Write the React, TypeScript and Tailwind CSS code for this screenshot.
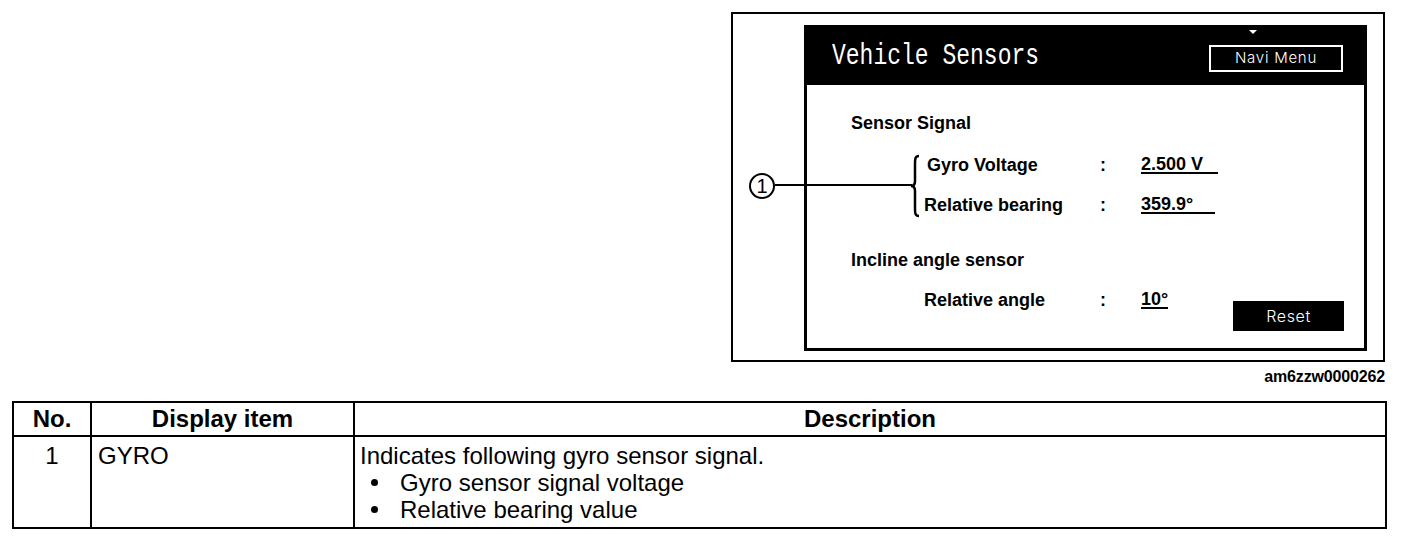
import React from "react";

const rows = [
  { label: "Gyro Voltage", value: "2.500 V", line: "w-[77px]", indent: "pl-[3px]" },
  { label: "Relative bearing", value: "359.9°", line: "w-[74px]", indent: "" },
];

const Value = ({ text, line }: { text: string; line: string }) => (
  <span className={`inline-block border-b-2 border-black leading-[16px] ${line}`}>{text}</span>
);

export default function App() {
  return (
    <div className="relative w-[1408px] h-[544px] overflow-hidden bg-white text-black font-['Liberation_Sans',Arial,sans-serif]">
      <div className="flex flex-col items-end pt-[12px] pr-[23px]">
        {/* figure frame */}
        <div className="flex w-[654px] h-[350px] border-2 border-black pl-[71px] pt-[11px] pr-[16px] pb-[9px]">
          <div className="flex flex-1 flex-col border-[3px] border-black">
            <div className="relative flex h-[57px] items-start justify-between bg-black pl-[25px] pr-[21px]">
              <span className="mt-[13px] inline-block origin-center scale-y-[1.25] font-['Liberation_Mono',monospace] text-[23px] leading-[30px] text-white">
                Vehicle Sensors
              </span>
              <span className="absolute left-[442px] top-[2px] h-0 w-0 border-x-[4px] border-t-[4px] border-x-transparent border-t-white" />
              <div className="mt-[17px] flex h-[27px] w-[134px] items-center justify-center border-2 border-white font-['Inter',sans-serif] text-[15px] font-light tracking-[0.05em] text-white">
                Navi Menu
              </div>
            </div>

            <div className="flex flex-1 flex-col pl-[44px] pr-[20px] pt-[26px] text-[18px] font-bold">
              <div className="leading-[24px]">Sensor Signal</div>
              <div className="mt-[10px] pl-[73px]">
                {rows.map((r) => (
                  <div key={r.label} className="flex h-[40px] items-center">
                    <span className={`w-[176px] ${r.indent}`}>{r.label}</span>
                    <span className="w-[41px]">:</span>
                    <Value text={r.value} line={r.line} />
                  </div>
                ))}
              </div>
              <div className="mt-[23px] leading-[24px]">Incline angle sensor</div>
              <div className="mt-[8px] flex items-start pl-[73px]">
                <span className="w-[176px] leading-[40px]">Relative angle</span>
                <span className="w-[41px] leading-[40px]">:</span>
                <div className="flex h-[40px] items-center">
                  <Value text="10°" line="" />
                </div>
                <div className="ml-auto mt-[21px] flex h-[30px] w-[111px] items-center justify-center bg-black font-['Inter',sans-serif] text-[16px] font-light tracking-[0.04em] text-white">
                  Reset
                </div>
              </div>
            </div>
          </div>
        </div>
        <div className="mt-[6px] text-[16px] font-bold leading-[18px] tracking-[-0.01em]">am6zzw0000262</div>
      </div>

      {/* callout */}
      <div className="absolute left-[749px] top-[173px] flex h-[26px] w-[26px] items-center justify-center rounded-full border-2 border-black bg-white text-[20px] leading-none">
        1
      </div>
      <div className="absolute left-[775px] top-[184px] h-[2px] w-[137px] bg-black" />
      <svg className="absolute left-[908px] top-[154px]" width="14" height="64" viewBox="0 0 14 64" fill="none">
        <path
          d="M11 2 C7 2 7 5 7 10 L7 27 C7 30 6 32 3 32 C6 32 7 34 7 37 L7 54 C7 59 7 62 11 62"
          stroke="black"
          strokeWidth="2.5"
        />
      </svg>

      {/* table */}
      <div className="ml-[12px] mt-[15px] w-[1375px] border-2 border-black text-[24px]">
        <div className="grid h-[34px] grid-cols-[76px_263px_1fr] border-b-2 border-black font-bold leading-[32px]">
          <div className="text-center">No.</div>
          <div className="border-l-2 border-black text-center">Display item</div>
          <div className="border-l-2 border-black text-center">Description</div>
        </div>
        <div className="grid h-[90px] grid-cols-[76px_263px_1fr] leading-[27px]">
          <div className="pt-[5px] text-center">1</div>
          <div className="border-l-2 border-black pl-[6px] pt-[5px]">GYRO</div>
          <div className="border-l-2 border-black pl-[5px] pt-[5px]">
            <div>Indicates following gyro sensor signal.</div>
            {["Gyro sensor signal voltage", "Relative bearing value"].map((t) => (
              <div key={t} className="flex items-center gap-[22px] pl-[11px]">
                <span className="h-[7px] w-[7px] rounded-full bg-black" />
                <span>{t}</span>
              </div>
            ))}
          </div>
        </div>
      </div>
    </div>
  );
}
